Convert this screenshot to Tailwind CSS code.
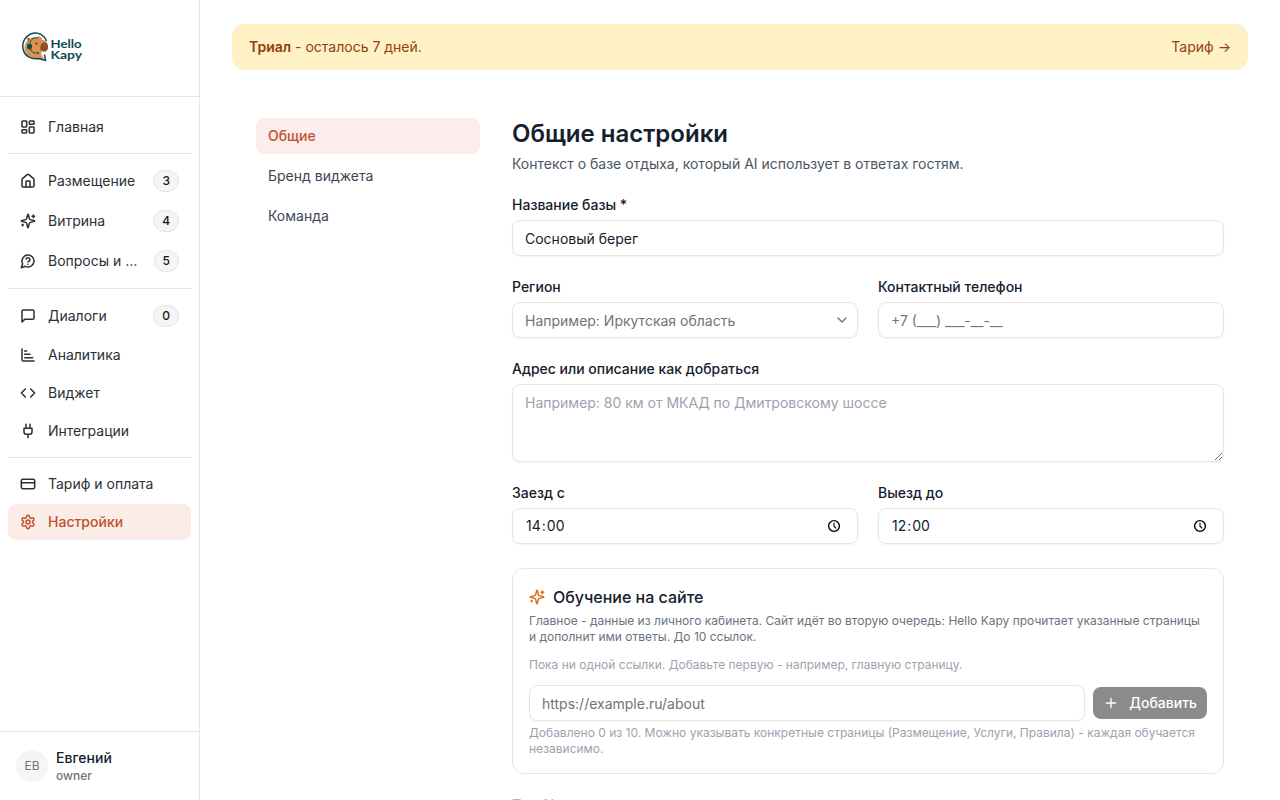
<!DOCTYPE html>
<html lang="ru">
<head>
    <meta charset="UTF-8">
    <meta name="viewport" content="width=device-width, initial-scale=1.0">
    <title>Hello Kapy - Общие настройки</title>
    <script src="https://cdn.jsdelivr.net/npm/@tailwindcss/browser@4"></script>
</head>
<body class="h-screen overflow-hidden bg-white font-['Inter',sans-serif] text-sm text-[#14202e]">
    <!-- Shared icons -->
    <svg class="hidden">
        <symbol id="sparkles" viewBox="0 0 24 24">
            <path d="M9.937 15.5A2 2 0 0 0 8.5 14.063l-6.135-1.582a.5.5 0 0 1 0-.962L8.5 9.936A2 2 0 0 0 9.937 8.5l1.582-6.135a.5.5 0 0 1 .963 0L14.063 8.5A2 2 0 0 0 15.5 9.937l6.135 1.581a.5.5 0 0 1 0 .964L15.5 14.063a2 2 0 0 0-1.437 1.437l-1.582 6.135a.5.5 0 0 1-.963 0z"/>
            <path d="M20 3v4M22 5h-4M4 17v2M5 18H3"/>
        </symbol>
        <symbol id="clock" viewBox="0 0 14 14">
            <circle cx="7" cy="7" r="5.400"/>
            <path d="M7 3.800V7.200l2.200 2.200" stroke-width="1.100"/>
        </symbol>
    </svg>

    <div class="flex h-full">
        <aside class="flex w-[200px] shrink-0 flex-col border-r border-[#e5e5e5]">
            <div class="flex h-[97px] shrink-0 items-center border-b border-[#e5e5e5] pl-[21px]">
                <svg class="h-8 w-16 overflow-visible" viewBox="0 0 64 32" fill="none">
                    <g transform="translate(0 -1)">
                        <path d="M7 9c2-2 5-3 8-2 3-3 6-1 6 2 3 0 6 2 6 6 0 5-3 5-6 5l-1 3 3 5c-7 1-14 0-18-6-3-5-1-10 2-13z" fill="#d9924f"/>
                        <path d="M20.500 13c3-3 6.500-1 6.500 3s-3 6-6 4c-2-1-2.500-4-.5-7z" fill="#8f4f2b"/>
                        <path d="M6 6.500l3 1-2 3z" fill="#8f4f2b"/>
                        <path d="M25.500 10C23 4 17.500 1 12 2.300 5 4 .8 10.500 2 17.500c1.200 7.500 8.500 11.500 16 10l6.500 2-1-6" stroke="#0f4a50" stroke-width="1.500"/>
                        <path d="M9 12c1-4 4-6 8-5M9.500 18c1 3 3 4 6 4" stroke="#0f4a50" stroke-width="1"/>
                        <ellipse cx="8.500" cy="15.500" rx="2.500" ry="3" fill="#0f4a50"/>
                        <circle cx="15.500" cy="12.500" r="1" fill="#0f4a50"/>
                        <circle cx="17" cy="22" r="1" fill="#0f4a50"/>
                    </g>
                    <text x="29.500" y="16" textLength="31" lengthAdjust="spacingAndGlyphs" font-family="Lato, sans-serif" font-weight="700" font-size="12" fill="#0f4a50">Hello</text>
                    <text x="29.500" y="27" textLength="31.500" lengthAdjust="spacingAndGlyphs" font-family="Lato, sans-serif" font-weight="700" font-size="12" fill="#0f4a50">Kapy</text>
                </svg>
            </div>

            <nav class="flex flex-1 flex-col px-2 pt-3 text-[#2a3039] [&_svg]:stroke-[2.3]">
                <a href="#" class="flex items-center gap-3 rounded-lg px-3 py-2">
                    <svg class="size-4 shrink-0" viewBox="0 0 24 24" fill="none" stroke="currentColor" stroke-width="2" stroke-linecap="round" stroke-linejoin="round"><rect width="7" height="9" x="3" y="3" rx="1"/><rect width="7" height="5" x="14" y="3" rx="1"/><rect width="7" height="9" x="14" y="12" rx="1"/><rect width="7" height="5" x="3" y="16" rx="1"/></svg>
                    <span>Главная</span>
                </a>

                <div class="mt-2 flex flex-col gap-0.5 border-t border-[#e5e5e5] pt-2">
                    <a href="#" class="flex items-center gap-3 rounded-lg px-3 py-2">
                        <svg class="size-4 shrink-0" viewBox="0 0 24 24" fill="none" stroke="currentColor" stroke-width="2" stroke-linecap="round" stroke-linejoin="round"><path d="M15 21v-8a1 1 0 0 0-1-1h-4a1 1 0 0 0-1 1v8"/><path d="M3 10a2 2 0 0 1 .709-1.528l7-6a2 2 0 0 1 2.582 0l7 6A2 2 0 0 1 21 10v9a2 2 0 0 1-2 2H5a2 2 0 0 1-2-2z"/></svg>
                        <span class="flex-1 truncate">Размещение</span>
                        <span class="rounded-full border border-[#e5e5e5] bg-[#f5f5f5] px-2 py-0.5 text-xs font-medium text-[#171717]">3</span>
                    </a>
                    <a href="#" class="flex items-center gap-3 rounded-lg px-3 py-2">
                        <svg class="size-4 shrink-0" fill="none" stroke="currentColor" stroke-width="2" stroke-linecap="round" stroke-linejoin="round"><use href="#sparkles"/></svg>
                        <span class="flex-1 truncate">Витрина</span>
                        <span class="rounded-full border border-[#e5e5e5] bg-[#f5f5f5] px-2 py-0.5 text-xs font-medium text-[#171717]">4</span>
                    </a>
                    <a href="#" class="flex items-center gap-3 rounded-lg px-3 py-2">
                        <svg class="size-4 shrink-0" viewBox="0 0 24 24" fill="none" stroke="currentColor" stroke-width="2" stroke-linecap="round" stroke-linejoin="round"><path d="M7.900 20A9 9 0 1 0 4 16.100L2 22Z"/><path d="M9.090 9a3 3 0 0 1 5.830 1c0 2-3 3-3 3M12 17h.01"/></svg>
                        <span class="flex-1 truncate">Вопросы и ответы</span>
                        <span class="rounded-full border border-[#e5e5e5] bg-[#f5f5f5] px-2 py-0.5 text-xs font-medium text-[#171717]">5</span>
                    </a>
                </div>

                <div class="mt-2 flex flex-col gap-0.5 border-t border-[#e5e5e5] pt-2">
                    <a href="#" class="flex items-center gap-3 rounded-lg px-3 py-2">
                        <svg class="size-4 shrink-0" viewBox="0 0 24 24" fill="none" stroke="currentColor" stroke-width="2" stroke-linecap="round" stroke-linejoin="round"><path d="M21 15a2 2 0 0 1-2 2H7l-4 4V5a2 2 0 0 1 2-2h14a2 2 0 0 1 2 2z"/></svg>
                        <span class="flex-1 truncate">Диалоги</span>
                        <span class="rounded-full border border-[#e5e5e5] bg-[#f5f5f5] px-2 py-0.5 text-xs font-medium text-[#171717]">0</span>
                    </a>
                    <a href="#" class="flex items-center gap-3 rounded-lg px-3 py-2">
                        <svg class="size-4 shrink-0" viewBox="0 0 24 24" fill="none" stroke="currentColor" stroke-width="2" stroke-linecap="round" stroke-linejoin="round"><path d="M3 3v16a2 2 0 0 0 2 2h16M7 16h12M7 11h8M7 6h3"/></svg>
                        <span>Аналитика</span>
                    </a>
                    <a href="#" class="flex items-center gap-3 rounded-lg px-3 py-2">
                        <svg class="size-4 shrink-0" viewBox="0 0 24 24" fill="none" stroke="currentColor" stroke-width="2" stroke-linecap="round" stroke-linejoin="round"><path d="m16 18 6-6-6-6M8 6l-6 6 6 6"/></svg>
                        <span>Виджет</span>
                    </a>
                    <a href="#" class="flex items-center gap-3 rounded-lg px-3 py-2">
                        <svg class="size-4 shrink-0" viewBox="0 0 24 24" fill="none" stroke="currentColor" stroke-width="2" stroke-linecap="round" stroke-linejoin="round"><path d="M12 22v-5M9 8V2M15 8V2M18 8v5a4 4 0 0 1-4 4h-4a4 4 0 0 1-4-4V8Z"/></svg>
                        <span>Интеграции</span>
                    </a>
                </div>

                <div class="mt-2 flex flex-col gap-0.5 border-t border-[#e5e5e5] pt-2">
                    <a href="#" class="flex items-center gap-3 rounded-lg px-3 py-2">
                        <svg class="size-4 shrink-0" viewBox="0 0 24 24" fill="none" stroke="currentColor" stroke-width="2" stroke-linecap="round" stroke-linejoin="round"><rect width="20" height="14" x="2" y="5" rx="2"/><path d="M2 10h20"/></svg>
                        <span>Тариф и оплата</span>
                    </a>
                    <a href="#" class="flex items-center gap-3 rounded-lg bg-[#fbece7] px-3 py-2 font-medium text-[#c2512a]">
                        <svg class="size-4 shrink-0" viewBox="0 0 24 24" fill="none" stroke="currentColor" stroke-width="2" stroke-linecap="round" stroke-linejoin="round"><path d="M12.220 2h-.44a2 2 0 0 0-2 2v.18a2 2 0 0 1-1 1.730l-.43.25a2 2 0 0 1-2 0l-.15-.08a2 2 0 0 0-2.730.73l-.22.38a2 2 0 0 0 .73 2.730l.15.1a2 2 0 0 1 1 1.720v.51a2 2 0 0 1-1 1.740l-.15.09a2 2 0 0 0-.73 2.730l.22.38a2 2 0 0 0 2.730.73l.15-.08a2 2 0 0 1 2 0l.43.25a2 2 0 0 1 1 1.730V20a2 2 0 0 0 2 2h.44a2 2 0 0 0 2-2v-.18a2 2 0 0 1 1-1.730l.43-.25a2 2 0 0 1 2 0l.15.08a2 2 0 0 0 2.730-.73l.22-.39a2 2 0 0 0-.73-2.730l-.15-.08a2 2 0 0 1-1-1.740v-.5a2 2 0 0 1 1-1.740l.15-.09a2 2 0 0 0 .73-2.730l-.22-.38a2 2 0 0 0-2.730-.73l-.15.08a2 2 0 0 1-2 0l-.43-.25a2 2 0 0 1-1-1.730V4a2 2 0 0 0-2-2z"/><circle cx="12" cy="12" r="3"/></svg>
                        <span>Настройки</span>
                    </a>
                </div>
            </nav>

            <div class="flex items-center gap-2 border-t border-[#e5e5e5] p-4">
                <div class="flex size-8 items-center justify-center rounded-full bg-[#f5f5f5] text-xs text-[#737373]">ЕВ</div>
                <div>
                    <div class="text-sm font-medium">Евгений</div>
                    <div class="text-xs font-medium text-[#737373]">owner</div>
                </div>
            </div>
        </aside>

        <main class="flex-1 overflow-hidden px-8 pt-6">
            <div class="flex items-center justify-between rounded-xl border border-[#fdf0c3] bg-[#fef1c6] px-4 py-3 text-[#92400e]">
                <span><b class="font-semibold">Триал</b> - осталось 7 дней.</span>
                <a href="#">Тариф →</a>
            </div>

            <div class="flex gap-8 px-6 pt-12">
                <nav class="flex w-56 shrink-0 flex-col gap-1 text-[#3c4657]">
                    <a href="#" class="rounded-lg bg-[#faedeb] px-3 py-2 font-medium text-[#c2512a]">Общие</a>
                    <a href="#" class="rounded-lg px-3 py-2">Бренд виджета</a>
                    <a href="#" class="rounded-lg px-3 py-2">Команда</a>
                </nav>

                <form class="flex min-w-0 flex-1 flex-col gap-6">
                    <div>
                        <h1 class="text-2xl font-semibold">Общие настройки</h1>
                        <p class="mt-1 text-[#4b5563]">Контекст о базе отдыха, который AI использует в ответах гостям.</p>
                    </div>

                    <div class="flex flex-col gap-2">
                        <label class="leading-none font-medium">Название базы *</label>
                        <input type="text" value="Сосновый берег" class="h-9 w-full rounded-lg border border-[#e5e5e5] px-3 py-1 shadow-xs">
                    </div>

                    <div class="grid grid-cols-2 gap-5">
                        <div class="flex flex-col gap-2">
                            <label class="leading-none font-medium">Регион</label>
                            <button type="button" class="flex h-9 items-center justify-between rounded-lg border border-[#e5e5e5] pr-[7px] pl-3 text-[#737373] shadow-xs">
                                <span class="pt-0.5">Например: Иркутская область</span>
                                <svg class="size-4" viewBox="0 0 24 24" fill="none" stroke="currentColor" stroke-width="2" stroke-linecap="round" stroke-linejoin="round"><path d="m6 9 6 6 6-6"/></svg>
                            </button>
                        </div>
                        <div class="flex flex-col gap-2">
                            <label class="leading-none font-medium">Контактный телефон</label>
                            <input type="text" placeholder="+7 (___) ___-__-__" class="h-9 w-full rounded-lg border border-[#e5e5e5] px-3 py-1 shadow-xs placeholder:text-[#737373]">
                        </div>
                    </div>

                    <div class="flex flex-col gap-2">
                        <label class="leading-none font-medium">Адрес или описание как добраться</label>
                        <textarea placeholder="Например: 80 км от МКАД по Дмитровскому шоссе" class="block h-[78px] w-full rounded-lg border border-[#e5e5e5] px-3 py-2 shadow-xs placeholder:text-[#9ca3af]"></textarea>
                    </div>

                    <!-- 24-hour time fields -->
                    <div class="grid grid-cols-2 gap-5">
                        <div class="flex flex-col gap-2">
                            <label class="leading-none font-medium">Заезд с</label>
                            <div class="flex h-9 items-center justify-between rounded-lg border border-[#e5e5e5] pr-4 pl-3 shadow-xs">
                                <span class="flex"><span class="px-px">14</span>:<span class="px-px">00</span></span>
                                <svg class="size-3.5 text-black" fill="none" stroke="currentColor" stroke-width="1.400"><use href="#clock"/></svg>
                            </div>
                        </div>
                        <div class="flex flex-col gap-2">
                            <label class="leading-none font-medium">Выезд до</label>
                            <div class="flex h-9 items-center justify-between rounded-lg border border-[#e5e5e5] pr-4 pl-3 shadow-xs">
                                <span class="flex"><span class="px-px">12</span>:<span class="px-px">00</span></span>
                                <svg class="size-3.5 text-black" fill="none" stroke="currentColor" stroke-width="1.400"><use href="#clock"/></svg>
                            </div>
                        </div>
                    </div>

                    <div class="rounded-xl border border-[#e5e5e5] p-4">
                        <h2 class="flex items-center gap-2 text-base font-medium">
                            <svg class="size-4 text-[#dd7018]" fill="none" stroke="currentColor" stroke-width="2.300" stroke-linecap="round" stroke-linejoin="round"><use href="#sparkles"/></svg>
                            Обучение на сайте
                        </h2>
                        <p class="mt-1 text-xs text-[#6b7280]">Главное - данные из личного кабинета. Сайт идёт во вторую очередь: Hello Kapy прочитает указанные страницы и дополнит ими ответы. До 10 ссылок.</p>
                        <p class="mt-3 text-xs text-[#9ca3af]">Пока ни одной ссылки. Добавьте первую - например, главную страницу.</p>
                        <div class="mt-3 flex items-center gap-2">
                            <input type="text" placeholder="https://example.ru/about" class="h-9 min-w-0 flex-1 rounded-lg border border-[#e5e5e5] px-3 py-1 shadow-xs placeholder:text-[#737373]">
                            <button type="button" class="flex h-8 w-[114px] items-center justify-between rounded-lg bg-[#8b8b8b] px-2.5 font-medium text-white">
                                <svg class="size-4" viewBox="0 0 24 24" fill="none" stroke="currentColor" stroke-width="2" stroke-linecap="round" stroke-linejoin="round"><path d="M5 12h14M12 5v14"/></svg>
                                Добавить
                            </button>
                        </div>
                        <p class="mt-1 text-xs text-[#9ca3af]">Добавлено 0 из 10. Можно указывать конкретные страницы (Размещение, Услуги, Правила) - каждая обучается независимо.</p>
                    </div>

                    <label class="leading-none font-medium text-[#b4b9c1]">Тон AI</label>
                </form>
            </div>
        </main>
    </div>
</body>
</html>
